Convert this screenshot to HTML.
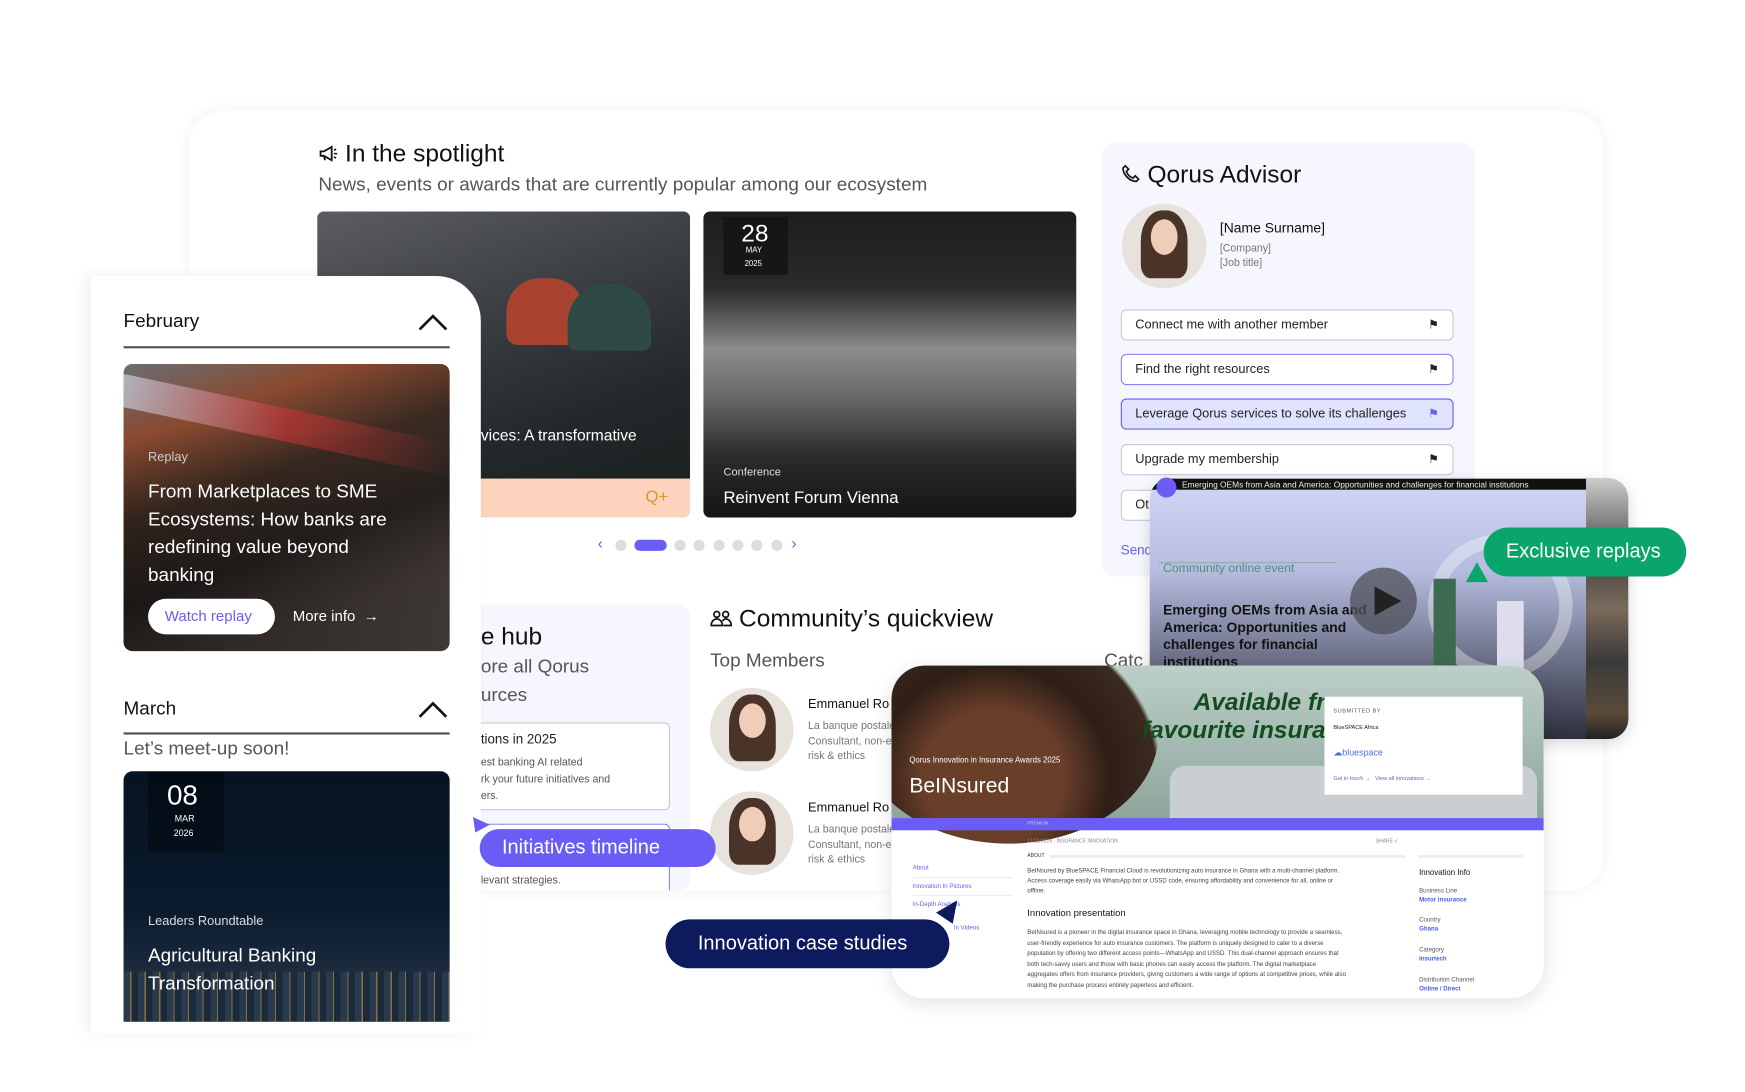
<!DOCTYPE html>
<html><head><meta charset="utf-8">
<style>
*{box-sizing:border-box;margin:0;padding:0}
html,body{width:1745px;height:1092px;overflow:hidden;background:#fff;font-family:"Liberation Sans",sans-serif}
#w{position:absolute;left:0;top:0;width:1568px;height:981px;transform:scale(1.113);transform-origin:0 0}
.a{position:absolute}
.t{position:absolute;white-space:nowrap}
.btn{position:absolute;left:1007px;width:299px;height:28px;border:1px solid #c9c9d2;border-radius:5px;background:#fff;font-size:11.5px;color:#222;padding:7px 12px}
.btn i{position:absolute;right:12px;top:6px;font-style:normal;font-size:11px}
.av{position:absolute;border-radius:50%;overflow:hidden;background:#e8e2dc}
.av:before{content:"";position:absolute;left:22%;top:8%;width:56%;height:80%;border-radius:45% 45% 20% 20%;background:#4a3328}
.av:after{content:"";position:absolute;left:34%;top:18%;width:32%;height:42%;border-radius:50%;background:#f0cdb8}
.dot{position:absolute;top:485px;width:10px;height:10px;border-radius:5px;background:#ddd}
</style></head><body><div id="w">

<div class="a" style="left:170px;top:100px;width:1270px;height:700px;border-radius:30px;background:#fff;box-shadow:0 0 14px rgba(0,0,0,.06)"></div>

<svg class="a" style="left:286px;top:130px" width="18" height="16"><path d="M2 6h3l7-4v12l-7-4H2z M5 10l1 4" fill="none" stroke="#111" stroke-width="1.6"/><path d="M14 5l2-1 M14 8h3 M14 11l2 1" stroke="#111" stroke-width="1.4"/></svg>
<div class="t" style="left:310px;top:125px;font-size:22px;color:#111">In the spotlight</div>
<div class="t" style="left:286px;top:156px;font-size:17px;color:#555">News, events or awards that are currently popular among our ecosystem</div>

<div class="a" style="left:285px;top:190px;width:335px;height:275px;border-radius:6px;overflow:hidden;background:#fdd3bd">
 <div class="a" style="left:0;top:0;width:335px;height:240px;background:linear-gradient(160deg,#5b5d62 0%,#3c3f44 40%,#23282b 75%,#1b2220 100%)"></div>
 <div class="a" style="left:170px;top:60px;width:70px;height:60px;border-radius:30px 30px 10px 10px;background:#a8432f"></div>
 <div class="a" style="left:225px;top:65px;width:75px;height:60px;border-radius:35px 35px 8px 8px;background:#2f4a45"></div>
 <div class="t" style="left:295px;top:248px;font-size:15px;color:#d49a2a">Q+</div>
</div>
<div class="t" style="left:432px;top:383px;font-size:14px;color:#fff">vices: A transformative</div>

<div class="a" style="left:632px;top:190px;width:335px;height:275px;border-radius:6px;overflow:hidden;background:linear-gradient(180deg,#1e1e1e 0%,#2a2a2a 25%,#8c8c8c 45%,#6a6a6a 60%,#2b2b2b 80%,#151515 100%)">
 <div class="a" style="left:18px;top:5px;width:58px;height:52px;background:rgba(20,20,20,.85)"></div>
 <div class="t" style="left:34px;top:7px;font-size:22px;color:#fff">28</div>
 <div class="t" style="left:38px;top:32px;font-size:7px;color:#fff">MAY</div>
 <div class="t" style="left:37px;top:44px;font-size:7px;color:#fff">2025</div>
 <div class="t" style="left:18px;top:229px;font-size:10px;color:#ddd">Conference</div>
 <div class="t" style="left:18px;top:249px;font-size:15px;color:#fff">Reinvent Forum Vienna</div>
</div>

<div class="t" style="left:537px;top:480px;font-size:14px;color:#6b5cf6">&#8249;</div>
<div class="dot" style="left:553px"></div>
<div class="dot" style="left:570px;width:29px;background:#6b5cf6"></div>
<div class="dot" style="left:606px"></div><div class="dot" style="left:623px"></div><div class="dot" style="left:641px"></div><div class="dot" style="left:658px"></div><div class="dot" style="left:675px"></div><div class="dot" style="left:693px"></div>
<div class="t" style="left:711px;top:480px;font-size:14px;color:#6b5cf6">&#8250;</div>

<div class="a" style="left:990px;top:128px;width:335px;height:390px;border-radius:12px;background:#f5f6fe"></div>
<svg class="a" style="left:1008px;top:148px" width="16" height="16"><path d="M3 1l3 3-2 2c1 3 3 5 6 6l2-2 3 3-2 2C7 15 1 9 1 3z" fill="none" stroke="#111" stroke-width="1.5"/></svg>
<div class="t" style="left:1031px;top:144px;font-size:22px;color:#111">Qorus Advisor</div>
<div class="av" style="left:1008px;top:183px;width:76px;height:76px"></div>
<div class="t" style="left:1096px;top:198px;font-size:12.5px;color:#111">[Name Surname]</div>
<div class="t" style="left:1096px;top:218px;font-size:9.5px;color:#777">[Company]</div>
<div class="t" style="left:1096px;top:231px;font-size:9.5px;color:#777">[Job title]</div>
<div class="btn" style="top:278px">Connect me with another member<i>&#9873;</i></div>
<div class="btn" style="top:318px;border-color:#8c86f0">Find the right resources<i>&#9873;</i></div>
<div class="btn" style="top:358px;border-color:#6b5cf6;background:#dfe3fc">Leverage Qorus services to solve its challenges<i style="color:#6b5cf6">&#9873;</i></div>
<div class="btn" style="top:399px">Upgrade my membership<i>&#9873;</i></div>
<div class="btn" style="top:440px">Ot</div>
<div class="t" style="left:1007px;top:487px;font-size:12px;color:#6b5cf6">Send</div>

<div class="a" style="left:420px;top:543px;width:200px;height:257px;background:#f5f6fe;border-radius:10px"></div>
<div class="t" style="left:432px;top:559px;font-size:22px;color:#111">e hub</div>
<div class="t" style="left:432px;top:589px;font-size:17px;color:#555">ore all Qorus</div>
<div class="t" style="left:432px;top:615px;font-size:17px;color:#555">urces</div>
<div class="a" style="left:410px;top:649px;width:192px;height:79px;border:1px solid #c9c9d2;border-radius:5px;background:#fff"></div>
<div class="t" style="left:432px;top:657px;font-size:12px;color:#222">tions in 2025</div>
<div class="t" style="left:432px;top:680px;font-size:9.5px;color:#555">est banking AI related</div>
<div class="t" style="left:432px;top:695px;font-size:9.5px;color:#555">rk your future initiatives and</div>
<div class="t" style="left:432px;top:710px;font-size:9.5px;color:#555">ers.</div>
<div class="a" style="left:410px;top:740px;width:192px;height:60px;border:1px solid #8c86f0;border-bottom:none;border-radius:5px 5px 0 0;background:#fff"></div>
<div class="t" style="left:432px;top:786px;font-size:9.5px;color:#555">levant strategies.</div>

<svg class="a" style="left:638px;top:548px" width="20" height="16"><circle cx="6" cy="4" r="2.6" fill="none" stroke="#111" stroke-width="1.5"/><circle cx="14" cy="4" r="2.6" fill="none" stroke="#111" stroke-width="1.5"/><path d="M1 14c0-4 3-6 5-6s5 2 5 6z M11 10c1-1 2-2 3-2 2 0 5 2 5 6h-7" fill="none" stroke="#111" stroke-width="1.5"/></svg>
<div class="t" style="left:664px;top:543px;font-size:22px;color:#111">Community’s quickview</div>
<div class="t" style="left:638px;top:584px;font-size:17px;color:#555">Top Members</div>
<div class="av" style="left:638px;top:618px;width:75px;height:75px"></div>
<div class="av" style="left:638px;top:711px;width:75px;height:75px"></div>
<div class="t" style="left:726px;top:627px;font-size:11.5px;color:#111">Emmanuel Ro</div>
<div class="t" style="left:726px;top:646px;font-size:9.5px;color:#777;line-height:13.5px">La banque postale<br>Consultant, non-e<br>risk &amp; ethics</div>
<div class="t" style="left:726px;top:720px;font-size:11.5px;color:#111">Emmanuel Ro</div>
<div class="t" style="left:726px;top:739px;font-size:9.5px;color:#777;line-height:13.5px">La banque postale<br>Consultant, non-e<br>risk &amp; ethics</div>
<div class="t" style="left:992px;top:584px;font-size:17px;color:#555">Catc</div>

<div class="a" style="left:82px;top:248px;width:350px;height:680px;background:#fff;border-radius:0 40px 0 0;box-shadow:-6px 0 14px rgba(0,0,0,.06)"></div>
<div class="t" style="left:111px;top:279px;font-size:17px;color:#111">February</div>
<svg class="a" style="left:375px;top:280px" width="28" height="18"><path d="M2 16 L14 4 L26 16" fill="none" stroke="#111" stroke-width="2.4"/></svg>
<div class="a" style="left:111px;top:311px;width:293px;height:1.5px;background:#555"></div>
<div class="a" style="left:111px;top:327px;width:293px;height:258px;border-radius:8px;overflow:hidden;background:linear-gradient(160deg,#6a6d72 0%,#8a4a30 20%,#3a2a22 40%,#2a2422 60%,#554b45 80%,#6d6560 100%)">
 <div class="a" style="left:0;top:40px;width:293px;height:30px;background:linear-gradient(100deg,#c8d3e0,#b33 50%,transparent);transform:skewY(12deg);opacity:.7"></div>
 <div class="a" style="left:0;top:60px;width:293px;height:198px;background:linear-gradient(180deg,transparent,rgba(0,0,0,.45))"></div>
</div>
<div class="t" style="left:133px;top:405px;font-size:11.5px;color:#ccc">Replay</div>
<div class="t" style="left:133px;top:429px;font-size:17px;color:#fff;line-height:25px">From Marketplaces to SME<br>Ecosystems: How banks are<br>redefining value beyond<br>banking</div>
<div class="a" style="left:133px;top:538px;width:114px;height:32px;border-radius:16px;background:#fff"></div>
<div class="t" style="left:148px;top:546px;font-size:13.5px;color:#6b5cf6">Watch replay</div>
<div class="t" style="left:263px;top:546px;font-size:13.5px;color:#fff">More info &nbsp;&#8594;</div>

<div class="t" style="left:111px;top:627px;font-size:17px;color:#111">March</div>
<svg class="a" style="left:375px;top:628px" width="28" height="18"><path d="M2 16 L14 4 L26 16" fill="none" stroke="#111" stroke-width="2.4"/></svg>
<div class="a" style="left:111px;top:658px;width:293px;height:1.5px;background:#555"></div>
<div class="t" style="left:111px;top:663px;font-size:17px;color:#555">Let’s meet-up soon!</div>
<div class="a" style="left:111px;top:693px;width:293px;height:225px;border-radius:8px 8px 0 0;overflow:hidden;background:linear-gradient(180deg,#061322 0%,#0a1a2c 55%,#1c2c3e 80%,#3a3340 100%)">
 <div class="a" style="left:22px;top:0;width:68px;height:72px;background:rgba(0,0,0,.35)"></div>
 <div class="t" style="left:39px;top:8px;font-size:25px;color:#fff">08</div>
 <div class="t" style="left:46px;top:38px;font-size:8px;color:#fff">MAR</div>
 <div class="t" style="left:45px;top:51px;font-size:8px;color:#fff">2026</div>
 <div class="a" style="left:0;top:180px;width:293px;height:45px;background:repeating-linear-gradient(90deg,#2a3a4d 0 6px,#8a7040 6px 7px,#1a2a3a 7px 13px)"></div>
</div>
<div class="t" style="left:133px;top:822px;font-size:11.5px;color:#ddd">Leaders Roundtable</div>
<div class="t" style="left:133px;top:846px;font-size:17px;color:#fff;line-height:25px">Agricultural Banking<br>Transformation</div>

<svg class="a" style="left:424px;top:733px" width="18" height="16"><path d="M1 1 L16 8 L3 15Z" fill="#6b5cf6"/></svg>
<div class="a" style="left:431px;top:745px;width:212px;height:34px;border-radius:17px;background:#6b5cf6"></div>
<div class="t" style="left:451px;top:751px;font-size:18px;color:#fff">Initiatives timeline</div>

<div class="a" style="left:1033px;top:430px;width:430px;height:234px;border-radius:18px;overflow:hidden;background:linear-gradient(180deg,#cfd6f5 0%,#b7bde0 35%,#6a6f86 70%,#2c2f3c 100%);box-shadow:0 4px 14px rgba(0,0,0,.15)">
 <div class="a" style="left:0;top:0;width:430px;height:10px;background:#111"></div>
 <div class="a" style="left:392px;top:0;width:38px;height:234px;background:linear-gradient(180deg,#ccc 0,#444 30%,#7a6a5a 50%,#3a3a3a 70%,#5a4a3a 90%,#222)"></div>
 <div class="a" style="left:250px;top:50px;width:130px;height:130px;border-radius:50%;border:12px solid rgba(255,255,255,.35)"></div>
 <div class="a" style="left:255px;top:90px;width:20px;height:80px;background:#3d6b4f"></div>
 <div class="a" style="left:312px;top:110px;width:24px;height:60px;background:#dde"></div>
 <div class="a" style="left:8px;top:75px;width:160px;height:1px;background:#9aa"></div>
</div>
<div class="a" style="left:1039px;top:429px;width:18px;height:18px;border-radius:9px;background:#6b5cf6"></div>
<div class="t" style="left:1062px;top:431px;font-size:7.5px;color:#eee">Emerging OEMs from Asia and America: Opportunities and challenges for financial institutions</div>
<div class="t" style="left:1045px;top:505px;font-size:11px;color:#4f8f7a">Community online event</div>
<div class="t" style="left:1045px;top:541px;font-size:12.5px;font-weight:bold;color:#111;line-height:15.5px">Emerging OEMs from Asia and<br>America: Opportunities and<br>challenges for financial<br>institutions</div>
<div class="a" style="left:1213px;top:510px;width:60px;height:60px;border-radius:30px;background:rgba(80,80,90,.75)"></div>
<svg class="a" style="left:1233px;top:525px" width="28" height="30"><path d="M2 2 L26 15 L2 28Z" fill="#222"/></svg>
<svg class="a" style="left:1316px;top:504px" width="22" height="20"><path d="M11 1 L21 19 L1 19Z" fill="#0aa56a"/></svg>

<div class="a" style="left:1333px;top:474px;width:182px;height:44px;border-radius:22px;background:#0aa56a"></div>
<div class="t" style="left:1353px;top:485px;font-size:18px;color:#fff">Exclusive replays</div>

<div class="a" style="left:801px;top:598px;width:586px;height:299px;border-radius:30px;overflow:hidden;background:#fff;box-shadow:0 4px 18px rgba(0,0,0,.12)">
 <div class="a" style="left:0;top:0;width:586px;height:137px;background:linear-gradient(180deg,#bccfc8 0%,#8ea59c 100%)"></div>
 <div class="a" style="left:-30px;top:-40px;width:270px;height:200px;border-radius:50%;background:radial-gradient(ellipse at 45% 70%,#6a3f2a 0 30%,#2e1e16 50%,#3b2a20 70%,transparent 72%)"></div>
 <div class="a" style="left:250px;top:90px;width:330px;height:47px;background:#c9cfd0;border-radius:14px 14px 0 0"></div>
 <div class="t" style="left:225px;top:20px;font-size:22px;font-weight:bold;font-style:italic;color:#124d1f;line-height:25px;text-align:right">Available fr<br>favourite insura</div>
 <div class="a" style="left:389px;top:28px;width:178px;height:88px;background:#fff"></div>
 <div class="t" style="left:397px;top:38px;font-size:5px;color:#555;letter-spacing:.5px">SUBMITTED BY</div>
 <div class="t" style="left:397px;top:53px;font-size:5px;color:#222">BlueSPACE Africa</div>
 <div class="t" style="left:397px;top:74px;font-size:8px;color:#4a6ee0">&#9729;bluespace</div>
 <div class="t" style="left:397px;top:99px;font-size:5px;color:#4a6ee0">Get in touch &#8594; &nbsp; View all innovations &#8594;</div>
 <div class="t" style="left:16px;top:82px;font-size:7px;color:#fff">Qorus Innovation in Insurance Awards 2025</div>
 <div class="t" style="left:16px;top:98px;font-size:19px;color:#fff">BeINsured</div>
 <div class="a" style="left:0;top:137px;width:586px;height:11px;background:#6b5cf6"></div>
 <div class="t" style="left:122px;top:139px;font-size:4px;color:#cce">PREMIUM</div>
 <div class="t" style="left:122px;top:155px;font-size:4.5px;color:#888">11/12/2024 · INSURANCE INNOVATION</div>
 <div class="t" style="left:435px;top:155px;font-size:4.5px;color:#888">SHARE &lt;</div>
 <div class="t" style="left:122px;top:168px;font-size:4.5px;color:#333">ABOUT</div>
 <div class="a" style="left:142px;top:170px;width:320px;height:3px;background:#eee"></div>
 <div class="a" style="left:473px;top:170px;width:95px;height:3px;background:#eee"></div>
 <div class="t" style="left:122px;top:181px;font-size:5.5px;color:#444;line-height:9px">BeINsured by BlueSPACE Financial Cloud is revolutionizing auto insurance in Ghana with a multi-channel platform.<br>Access coverage easily via WhatsApp bot or USSD code, ensuring affordability and convenience for all, online or<br>offline.</div>
 <div class="t" style="left:122px;top:217px;font-size:8.5px;color:#111">Innovation presentation</div>
 <div class="t" style="left:122px;top:236px;font-size:5.5px;color:#444;line-height:9.5px">BeINsured is a pioneer in the digital insurance space in Ghana, leveraging mobile technology to provide a seamless,<br>user-friendly experience for auto insurance customers. The platform is uniquely designed to cater to a diverse<br>population by offering two different access points—WhatsApp and USSD. This dual-channel approach ensures that<br>both tech-savvy users and those with basic phones can easily access the platform. The digital marketplace<br>aggregates offers from insurance providers, giving customers a wide range of options at competitive prices, while also<br>making the purchase process entirely paperless and efficient.</div>
 <div class="t" style="left:19px;top:179px;font-size:5.5px;color:#6b5cf6">About</div>
 <div class="a" style="left:19px;top:190px;width:90px;height:1px;background:#eee"></div>
 <div class="t" style="left:19px;top:196px;font-size:5.5px;color:#6b5cf6">Innovation In Pictures</div>
 <div class="a" style="left:19px;top:206px;width:90px;height:1px;background:#eee"></div>
 <div class="t" style="left:19px;top:212px;font-size:5.5px;color:#6b5cf6">In-Depth Analysis</div>
 <div class="t" style="left:56px;top:233px;font-size:5.5px;color:#6b5cf6">In Videos</div>
 <div class="t" style="left:474px;top:183px;font-size:7px;color:#111">Innovation Info</div>
 <div class="t" style="left:474px;top:199px;font-size:5.5px;color:#555;line-height:8px">Business Line<br><b style="color:#4a5ce6">Motor insurance</b></div>
 <div class="t" style="left:474px;top:225px;font-size:5.5px;color:#555;line-height:8px">Country<br><b style="color:#4a5ce6">Ghana</b></div>
 <div class="t" style="left:474px;top:252px;font-size:5.5px;color:#555;line-height:8px">Category<br><b style="color:#4a5ce6">Insurtech</b></div>
 <div class="t" style="left:474px;top:279px;font-size:5.5px;color:#555;line-height:8px">Distribution Channel<br><b style="color:#4a5ce6">Online / Direct</b></div>
</div>
<svg class="a" style="left:840px;top:808px" width="22" height="24"><path d="M20 1 L1 12 L16 22Z" fill="#0d1b5e"/></svg>

<div class="a" style="left:598px;top:826px;width:255px;height:44px;border-radius:22px;background:#0d1b5e"></div>
<div class="t" style="left:627px;top:837px;font-size:18px;color:#fff">Innovation case studies</div>

</div></body></html>
